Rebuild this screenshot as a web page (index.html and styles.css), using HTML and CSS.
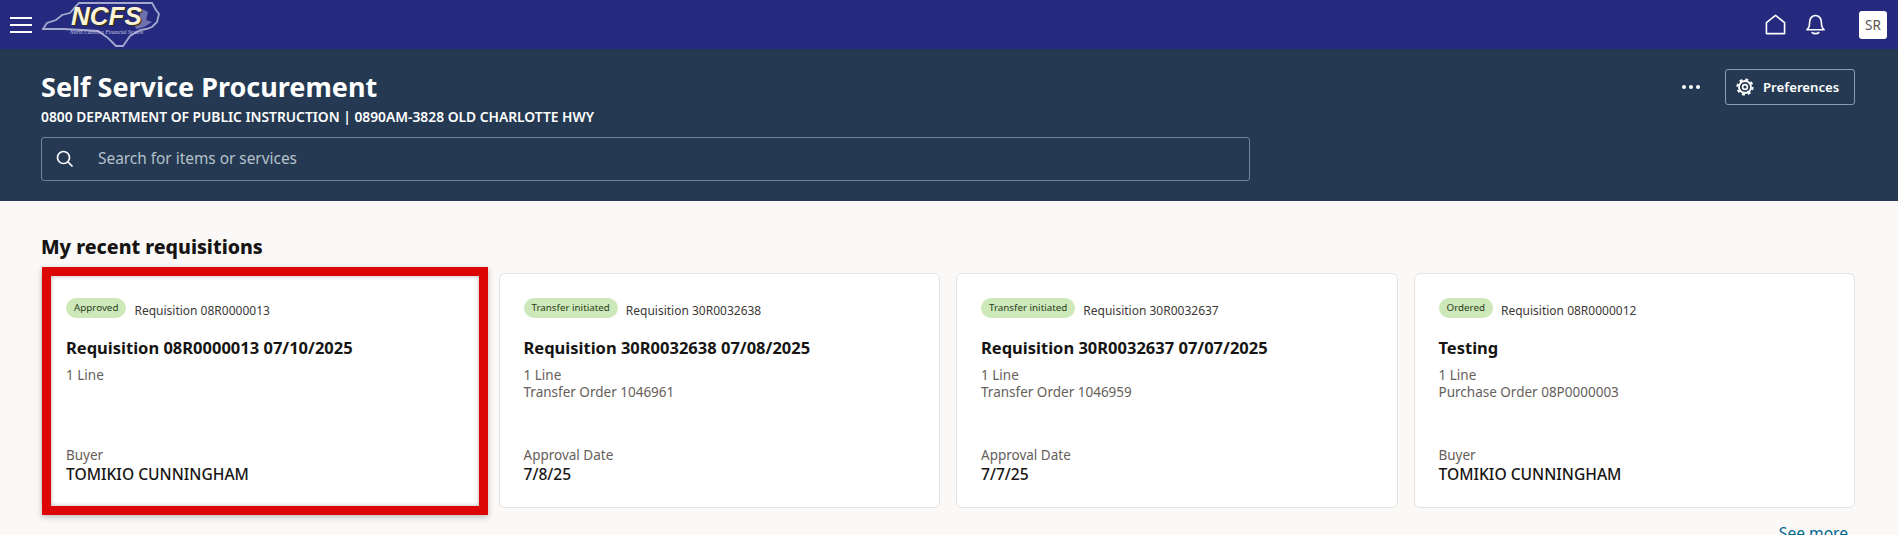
FILE: index.html
```html
<html>
    <head>
        <link rel="stylesheet" href="styles.css">
    </head>
    <body>
        <div class="topbar">
            <div class="menu"><span></span><span></span><span></span></div>
            <div class="logo">
                <svg class="logo-map" width="118" height="48" viewBox="0 0 118 48">
                    <path d="M1 29 L5 23 L14 20 L20 15 L28 13 L33 7 L37 3 L110 3 L114 10 L117 14 L115 22 L110 27 L104 29 L98 30 L88 36 L81 46 L74 46 L66 38 L56 31 L40 30 L22 29 Z" fill="none" stroke="#a5a8cf" stroke-width="1.8"/>
                    <path d="M98 8 L106 12 L104 20 L110 22 L102 27 L94 29 L92 22 L98 18 Z" fill="#8d90c0" opacity=".7"/>
                </svg>
                <span class="logo-name">NCFS</span>
                <span class="logo-sub">North Carolina Financial System</span>
            </div>
            <div class="top-right">
                <svg class="top-icon" width="21" height="21" viewBox="0 0 22 22" fill="none" stroke="#fff" stroke-width="1.7">
                    <path d="M1.5 20.5 V9 L11 1.5 L20.5 9 V20.5 Z" stroke-linejoin="round"/>
                </svg>
                <svg class="top-icon bell" width="19" height="21" viewBox="0 0 20 22" fill="none" stroke="#fff" stroke-width="1.7">
                    <path d="M1 16.5 C3.5 14.5 3.8 12 3.8 8.5 C3.8 4.5 6.5 1.5 10 1.5 C13.5 1.5 16.2 4.5 16.2 8.5 C16.2 12 16.5 14.5 19 16.5 Z" stroke-linejoin="round"/>
                    <path d="M6.5 19.5 C8 21 12 21 13.5 19.5" stroke-linecap="round"/>
                </svg>
                <div class="avatar">SR</div>
            </div>
        </div>

        <div class="hero">
            <div class="hero-left">
                <h1>Self Service Procurement</h1>
                <div class="org">0800 DEPARTMENT OF PUBLIC INSTRUCTION | 0890AM-3828 OLD CHARLOTTE HWY</div>
                <div class="search">
                    <svg width="18" height="18" viewBox="0 0 18 18" fill="none" stroke="#fff" stroke-width="1.7">
                        <circle cx="7.5" cy="7.5" r="6"/>
                        <path d="M12 12 L16.5 16.5"/>
                    </svg>
                    <span>Search for items or services</span>
                </div>
            </div>
            <div class="hero-right">
                <div class="dots"><span></span><span></span><span></span></div>
                <div class="pref">
                    <svg width="18" height="18" viewBox="0 0 18 18" fill="none" stroke="#fff">
                        <circle cx="9" cy="9" r="2.4" stroke-width="1.6"/>
                        <circle cx="9" cy="9" r="6" stroke-width="1.8"/>
                        <circle cx="9" cy="9" r="7.6" stroke-width="2" stroke-dasharray="3 2.97"/>
                    </svg>
                    Preferences
                </div>
            </div>
        </div>

        <div class="content">
            <h2>My recent requisitions</h2>
            <div class="cards">
                <div class="card picked">
                    <div class="card-top"><span class="badge">Approved</span><span class="req">Requisition 08R0000013</span></div>
                    <div class="card-title">Requisition 08R0000013 07/10/2025</div>
                    <div class="card-lines">1 Line</div>
                    <div class="card-foot">
                        <div class="foot-label">Buyer</div>
                        <div class="foot-value">TOMIKIO CUNNINGHAM</div>
                    </div>
                    <div class="redbox"></div>
                </div>
                <div class="card">
                    <div class="card-top"><span class="badge">Transfer initiated</span><span class="req">Requisition 30R0032638</span></div>
                    <div class="card-title">Requisition 30R0032638 07/08/2025</div>
                    <div class="card-lines">1 Line<br>Transfer Order 1046961</div>
                    <div class="card-foot">
                        <div class="foot-label">Approval Date</div>
                        <div class="foot-value">7/8/25</div>
                    </div>
                </div>
                <div class="card">
                    <div class="card-top"><span class="badge">Transfer initiated</span><span class="req">Requisition 30R0032637</span></div>
                    <div class="card-title">Requisition 30R0032637 07/07/2025</div>
                    <div class="card-lines">1 Line<br>Transfer Order 1046959</div>
                    <div class="card-foot">
                        <div class="foot-label">Approval Date</div>
                        <div class="foot-value">7/7/25</div>
                    </div>
                </div>
                <div class="card">
                    <div class="card-top"><span class="badge">Ordered</span><span class="req">Requisition 08R0000012</span></div>
                    <div class="card-title">Testing</div>
                    <div class="card-lines">1 Line<br>Purchase Order 08P0000003</div>
                    <div class="card-foot">
                        <div class="foot-label">Buyer</div>
                        <div class="foot-value">TOMIKIO CUNNINGHAM</div>
                    </div>
                </div>
            </div>
            <div class="see-more">See more</div>
        </div>
    </body>
</html>
```
FILE: styles.css
```css
html, body{
    margin: 0;
    height: 535px;
    overflow: hidden;
    background-color: #fbf9f8;
    font-family: "Noto Sans", "Open Sans", sans-serif;
    color: #161513;
}
.topbar{
    display: flex;
    align-items: center;
    height: 49px;
    padding: 0 11px 0 10px;
    background-color: #262a7e;
}
.menu{
    display: flex;
    flex-direction: column;
    gap: 5px;
    width: 22px;
}
.menu span{
    height: 2px;
    background-color: #fff;
}
.logo{
    position: relative;
    width: 118px;
    height: 48px;
    margin-left: 10px;
    align-self: flex-start;
}
.logo-map{
    position: absolute;
    left: 0;
    top: 0;
}
.logo-name{
    position: absolute;
    left: 29px;
    top: 4px;
    font-family: "Liberation Sans", sans-serif;
    font-size: 26px;
    line-height: 24px;
    font-weight: bold;
    font-style: italic;
    color: #fdf3d6;
    text-shadow: 1px 1px 1px #3a3200;
}
.logo-sub{
    position: absolute;
    left: 28px;
    top: 28px;
    font-family: "Liberation Serif", serif;
    font-size: 5.5px;
    line-height: 8px;
    font-style: italic;
    white-space: nowrap;
    color: #c9cbe6;
}
.top-right{
    display: flex;
    align-items: center;
    margin-left: auto;
}
.top-icon{
    display: block;
}
.bell{
    margin-left: 20px;
    margin-right: 34px;
}
.avatar{
    display: flex;
    align-items: center;
    justify-content: center;
    width: 28px;
    height: 28px;
    border-radius: 3px;
    background-color: #fff;
    color: #5b5652;
    font-size: 13.5px;
}
.hero{
    display: flex;
    justify-content: space-between;
    height: 152px;
    padding: 0 43px 0 41px;
    background-color: #253a52;
    color: #fff;
}
.hero h1{
    margin: 19px 0 0 0;
    font-size: 27px;
    line-height: 38px;
    font-weight: 700;
}
.org{
    margin-top: 2px;
    font-size: 13.8px;
    line-height: 18px;
    font-weight: 600;
    white-space: nowrap;
}
.search{
    display: flex;
    align-items: center;
    box-sizing: border-box;
    width: 1209px;
    height: 44px;
    margin-top: 11px;
    padding-left: 14px;
    border: solid 1px #6f8296;
    border-radius: 3px;
}
.search span{
    margin: 0 0 2px 24px;
    font-size: 15.4px;
    color: #b6c1cc;
}
.hero-right{
    display: flex;
    align-items: center;
    height: 36px;
    margin-top: 20px;
}
.dots{
    display: flex;
    gap: 3px;
    margin-right: 25px;
}
.dots span{
    width: 4px;
    height: 4px;
    border-radius: 50%;
    background-color: #fff;
}
.pref{
    display: flex;
    align-items: center;
    gap: 9px;
    box-sizing: border-box;
    width: 130px;
    height: 36px;
    padding-left: 10px;
    border: solid 1px #8d9bad;
    border-radius: 3px;
    font-size: 13.2px;
    font-weight: 600;
}
.content{
    padding: 0 43px 0 41px;
}
.content h2{
    margin: 0;
    padding-top: 32px;
    font-size: 19.5px;
    line-height: 28px;
    font-weight: 800;
}
.cards{
    display: grid;
    grid-template-columns: repeat(4, 1fr);
    gap: 16px;
    margin-top: 12px;
}
.card{
    position: relative;
    box-sizing: border-box;
    height: 235px;
    padding: 24px 24px 0 24px;
    border: solid 1px #e5e3e1;
    border-radius: 6px;
    background-color: #fff;
}
.card-top{
    display: flex;
    align-items: center;
    gap: 8px;
    height: 20px;
}
.badge{
    padding: 0 8px;
    border-radius: 10px;
    background-color: #cde8b9;
    font-size: 9.8px;
    line-height: 19px;
    height: 20px;
    color: #2a3d1c;
}
.req{
    padding-top: 4px;
    font-size: 12px;
    color: #3c3936;
}
.card-title{
    margin-top: 19px;
    font-size: 16.5px;
    line-height: 22px;
    font-weight: 700;
}
.card-lines{
    margin-top: 8px;
    height: 80px;
    font-size: 13.5px;
    line-height: 17px;
    color: #65605b;
}
.foot-label{
    font-size: 13.5px;
    line-height: 17px;
    color: #65605b;
}
.foot-value{
    font-size: 15.6px;
    line-height: 20px;
    font-weight: 500;
}
.redbox{
    position: absolute;
    left: 0;
    top: -7px;
    width: 446px;
    height: 248px;
    box-sizing: border-box;
    border: solid 9px #dc0606;
    box-shadow: 0 2px 6px rgba(0, 0, 0, .25), inset 0 0 4px rgba(0, 0, 0, .3);
}
.see-more{
    margin-top: 14px;
    text-align: right;
    padding-right: 7px;
    font-size: 15.6px;
    color: #00688c;
}
```
